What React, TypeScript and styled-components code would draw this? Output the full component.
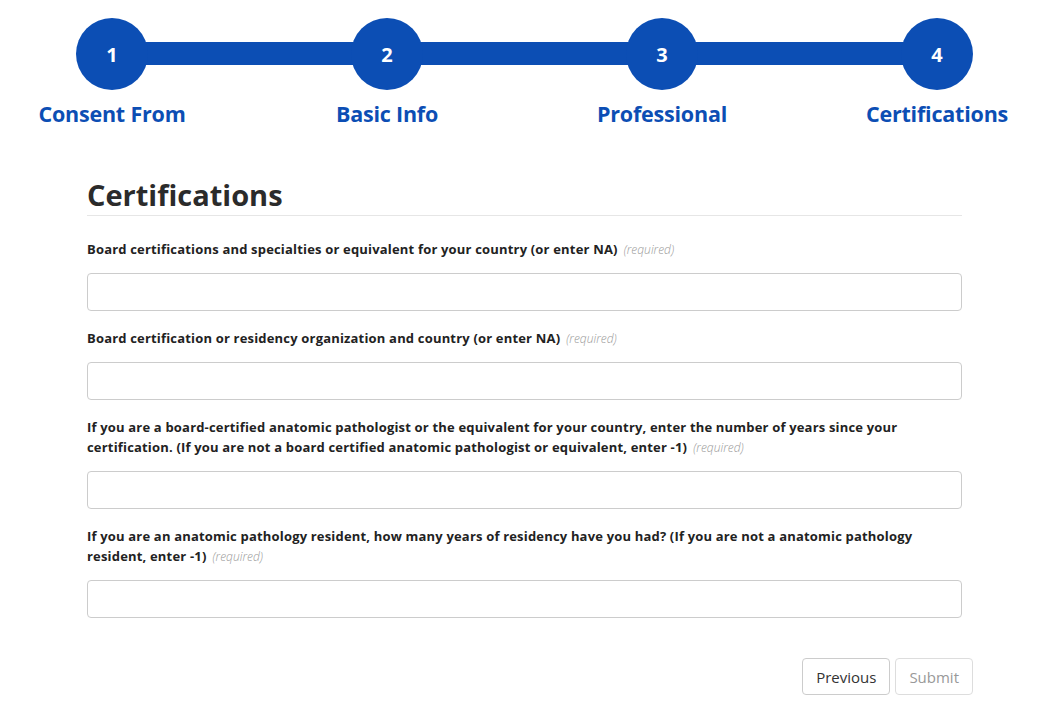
import React from 'react';
import styled, { createGlobalStyle } from 'styled-components';

const GlobalStyle = createGlobalStyle`
  body {
    margin: 0;
    background: #fff;
    font-family: "Open Sans", "Liberation Sans", sans-serif;
    color: #222;
  }
`;

const BLUE = '#0c4eb4';

const Page = styled.div`
  width: 1053px;
  padding-top: 18px;
`;

const Stepper = styled.div`
  display: flex;
  justify-content: space-between;
  width: 975px;
  margin-left: 37px;
  background: linear-gradient(${BLUE}, ${BLUE}) no-repeat;
  background-size: calc(100% - 150px) 23px;
  background-position: 75px 24px;
`;

const Step = styled.div`
  width: 150px;
  display: flex;
  flex-direction: column;
  align-items: center;
`;

const Circle = styled.div`
  width: 72px;
  height: 72px;
  border-radius: 50%;
  background: ${BLUE};
  color: #fff;
  font-weight: 700;
  font-size: 20px;
  display: flex;
  align-items: center;
  justify-content: center;
`;

const StepLabel = styled.div`
  margin-top: 9px;
  color: ${BLUE};
  font-weight: 700;
  font-size: 21.5px;
  white-space: nowrap;
  letter-spacing: -0.2px;
`;

const Form = styled.div`
  width: 875px;
  margin: 47px 0 0 87px;
`;

const Heading = styled.h2`
  margin: 0;
  font-size: 29px;
  font-weight: 700;
  color: #2b2b2b;
  line-height: 40px;
  border-bottom: 1px solid #e6e6e6;
`;

const Fields = styled.div`
  display: flex;
  flex-direction: column;
  gap: 17px;
  margin-top: 23px;
`;

const Field = styled.div`
  display: flex;
  flex-direction: column;
  gap: 13px;
`;

const Label = styled.label`
  font-size: 13px;
  font-weight: 700;
  line-height: 20px;
  letter-spacing: 0.18px;
  color: #222;
`;

const Required = styled.span`
  font-style: italic;
  font-weight: 300;
  font-size: 12px;
  letter-spacing: 0;
  color: #999;
  margin-left: 6px;
`;

const Input = styled.input`
  box-sizing: border-box;
  height: 38px;
  width: 100%;
  border: 1px solid #ccc;
  border-radius: 4px;
  font: inherit;
`;

const Actions = styled.div`
  display: flex;
  justify-content: flex-end;
  gap: 5px;
  width: 886px;
  margin: 40px 0 0 87px;
`;

const Button = styled.button<{ $disabled?: boolean }>`
  height: 37px;
  padding: 0 13px;
  background: #fff;
  border: 1px solid ${(p) => (p.$disabled ? '#ddd' : '#ccc')};
  border-radius: 4px;
  font-family: "Open Sans", "Liberation Sans", sans-serif;
  font-size: 15px;
  color: ${(p) => (p.$disabled ? '#999' : '#333')};
`;

const steps = ['Consent From', 'Basic Info', 'Professional', 'Certifications'];

const questions = [
  'Board certifications and specialties or equivalent for your country (or enter NA)',
  'Board certification or residency organization and country (or enter NA)',
  'If you are a board-certified anatomic pathologist or the equivalent for your country, enter the number of years since your certification. (If you are not a board certified anatomic pathologist or equivalent, enter -1)',
  'If you are an anatomic pathology resident, how many years of residency have you had? (If you are not a anatomic pathology resident, enter -1)',
];

function App() {
  return (
    <Page>
      <GlobalStyle />
      <Stepper>
        {steps.map((s, i) => (
          <Step key={s}>
            <Circle>{i + 1}</Circle>
            <StepLabel>{s}</StepLabel>
          </Step>
        ))}
      </Stepper>
      <Form>
        <Heading>Certifications</Heading>
        <Fields>
          {questions.map((q, i) => (
            <Field key={i}>
              <Label>
                {q}
                <Required>(required)</Required>
              </Label>
              <Input type="text" />
            </Field>
          ))}
        </Fields>
      </Form>
      <Actions>
        <Button>Previous</Button>
        <Button $disabled disabled>Submit</Button>
      </Actions>
    </Page>
  );
}

export default App;
